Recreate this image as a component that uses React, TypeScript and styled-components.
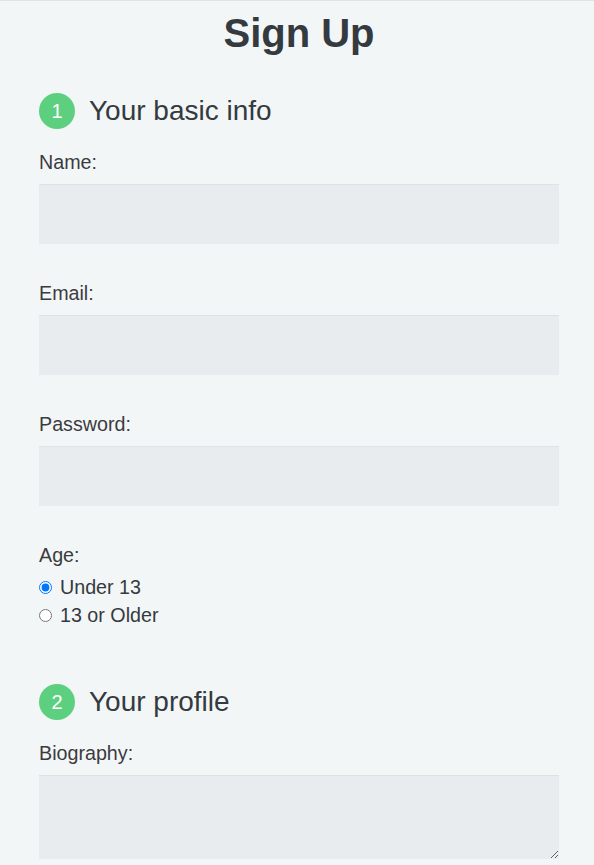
import React from "react";
import styled, { createGlobalStyle } from "styled-components";

const Global = createGlobalStyle`
  html, body { margin: 0; padding: 0; background: #f3f6f7; }
  body { font-family: "Liberation Sans", Arial, sans-serif; color: #343a40; }
  * { box-sizing: border-box; }
`;

const Page = styled.div`
  border-top: 1px solid #dfe3e5;
  padding: 0 35px 0 39px;
`;

const Title = styled.h1`
  margin: 8px 0 36px;
  font-size: 40px;
  line-height: 48px;
  font-weight: 700;
  text-align: center;
  color: #343a40;
`;

const Section = styled.section<{ $gap?: number }>`
  display: flex;
  flex-direction: column;
  margin-top: ${(p) => p.$gap ?? 0}px;
`;

const SectionHeader = styled.div`
  display: flex;
  align-items: center;
  gap: 14px;
  height: 36px;
  margin-bottom: 21px;
`;

const Step = styled.span`
  width: 36px;
  height: 36px;
  border-radius: 50%;
  background: #5dd080;
  color: #fff;
  font-size: 20px;
  display: flex;
  align-items: center;
  justify-content: center;
`;

const SectionTitle = styled.h2`
  margin: 0;
  font-size: 28px;
  font-weight: 400;
  color: #343a40;
`;

const Field = styled.div`
  display: flex;
  flex-direction: column;
  margin-bottom: 37px;
`;

const Label = styled.label`
  font-size: 19.7px;
  line-height: 24px;
  color: #3b3b3f;
  margin-bottom: 10px;
`;

const TextInput = styled.input`
  width: 520px;
  height: 60px;
  border: none;
  border-top: 1px solid #dde2e5;
  background: #e8ecee;
  font-size: 18px;
  padding: 0 12px;
  outline: none;
`;

const TextArea = styled.textarea`
  width: 520px;
  height: 84px;
  border: none;
  border-top: 1px solid #dde2e5;
  background: #e8ecee;
  font-size: 18px;
  padding: 8px 12px;
  outline: none;
  resize: both;
`;

const RadioGroup = styled.div`
  display: flex;
  flex-direction: column;
  margin-top: -4px;
`;

const RadioRow = styled.label`
  display: flex;
  align-items: center;
  height: 28px;
  font-size: 19.7px;
  color: #343a40;
  input { margin: 0 8px 0 0; width: 13px; height: 13px; }
`;

export default function App() {
  return (
    <>
      <Global />
      <Page>
        <Title>Sign Up</Title>
        <Section>
          <SectionHeader>
            <Step>1</Step>
            <SectionTitle>Your basic info</SectionTitle>
          </SectionHeader>
          <Field>
            <Label htmlFor="name">Name:</Label>
            <TextInput id="name" type="text" />
          </Field>
          <Field>
            <Label htmlFor="email">Email:</Label>
            <TextInput id="email" type="email" />
          </Field>
          <Field>
            <Label htmlFor="password">Password:</Label>
            <TextInput id="password" type="password" />
          </Field>
          <Field>
            <Label>Age:</Label>
            <RadioGroup>
              <RadioRow>
                <input type="radio" name="age" defaultChecked />
                Under 13
              </RadioRow>
              <RadioRow>
                <input type="radio" name="age" />
                13 or Older
              </RadioRow>
            </RadioGroup>
          </Field>
        </Section>
        <Section $gap={18}>
          <SectionHeader>
            <Step>2</Step>
            <SectionTitle>Your profile</SectionTitle>
          </SectionHeader>
          <Field>
            <Label htmlFor="bio">Biography:</Label>
            <TextArea id="bio" />
          </Field>
        </Section>
      </Page>
    </>
  );
}
